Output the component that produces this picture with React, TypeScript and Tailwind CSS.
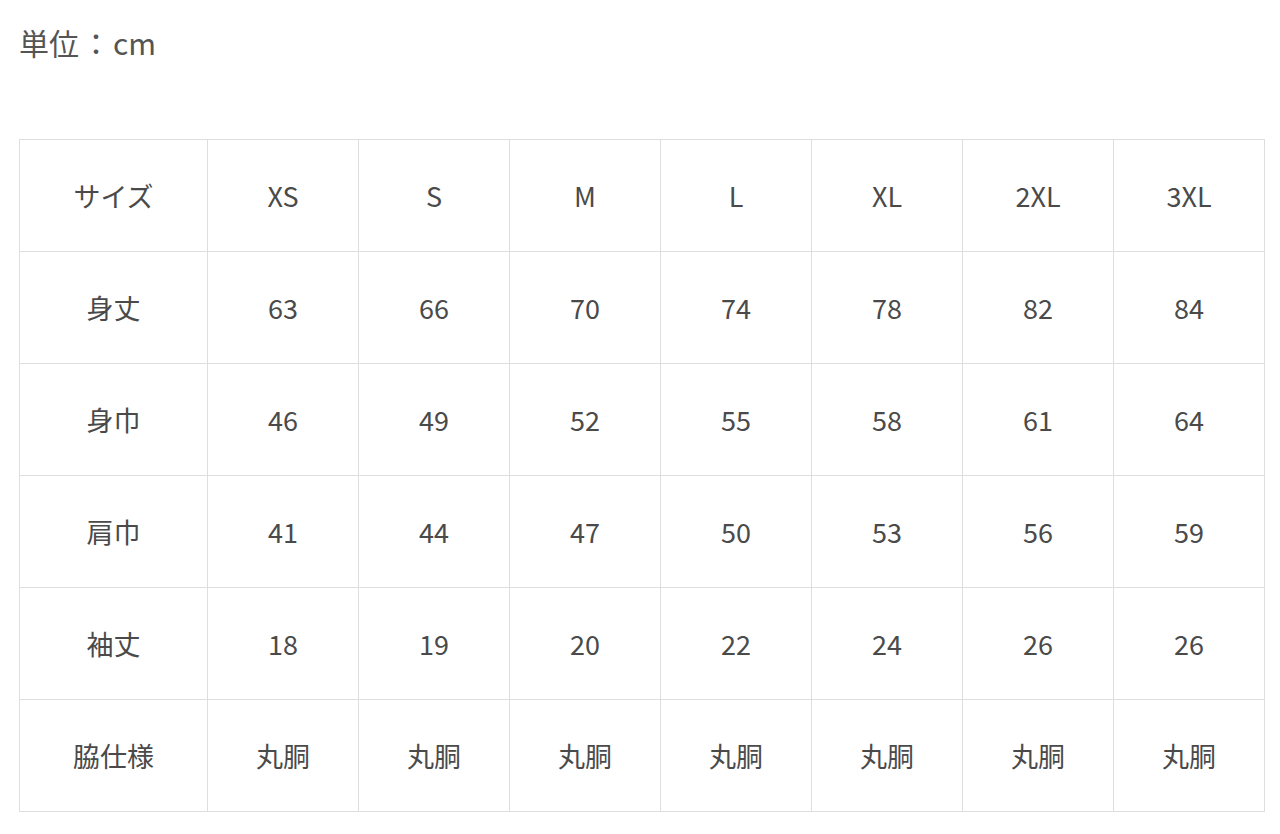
import React from 'react';

const sizes = ['XS', 'S', 'M', 'L', 'XL', '2XL', '3XL'];

const rows: { label: string; values: string[] }[] = [
  { label: '身丈', values: ['63', '66', '70', '74', '78', '82', '84'] },
  { label: '身巾', values: ['46', '49', '52', '55', '58', '61', '64'] },
  { label: '肩巾', values: ['41', '44', '47', '50', '53', '56', '59'] },
  { label: '袖丈', values: ['18', '19', '20', '22', '24', '26', '26'] },
  { label: '脇仕様', values: Array(7).fill('丸胴') },
];

const cell = 'border border-[#dedede] text-center align-middle';

const App: React.FC = () => {
  return (
    <div
      className="min-h-[834px] bg-white px-[19px] pt-[22px] text-[#4a4a4a]"
      style={{ fontFamily: '"Noto Sans CJK JP", "Noto Sans", sans-serif' }}
    >
      <p className="text-[30px] leading-[40px] text-[#555]">
        単位<span className="mx-[2px]">：</span>cm
      </p>

      <table className="mt-[77px] w-[1244px] table-fixed border-collapse text-[27px] leading-none">
        <colgroup>
          <col className="w-[188px]" />
          {sizes.map(s => (
            <col key={s} className="w-[151px]" />
          ))}
        </colgroup>
        <tbody>
          <tr className="h-[112px]">
            <td className={cell}>サイズ</td>
            {sizes.map(s => (
              <td key={s} className={cell}>{s}</td>
            ))}
          </tr>
          {rows.map(row => (
            <tr key={row.label} className="h-[112px]">
              <td className={cell}>{row.label}</td>
              {row.values.map((v, i) => (
                <td key={i} className={cell}>{v}</td>
              ))}
            </tr>
          ))}
        </tbody>
      </table>
    </div>
  );
};

export default App;
